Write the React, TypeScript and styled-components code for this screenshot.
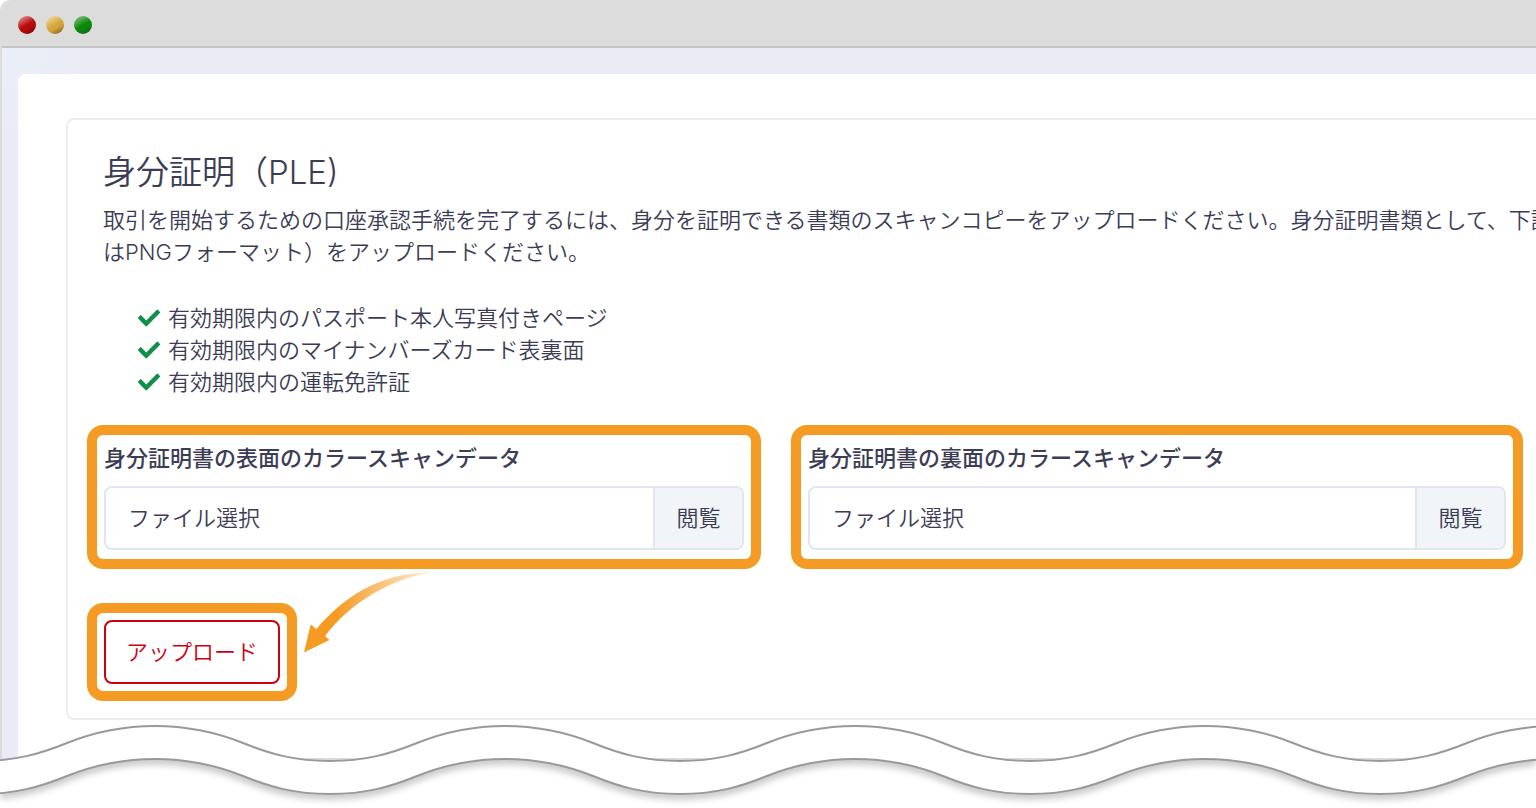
import React from "react";
import styled, { createGlobalStyle } from "styled-components";
import { FaCheck } from "react-icons/fa";

const GlobalStyle = createGlobalStyle`
  *, *::before, *::after { box-sizing: border-box; }
  body {
    margin: 0;
    background: #fff;
    color: #3c3d55;
    font-family: Inter, "Noto Sans CJK JP", sans-serif;
    font-size: 22px;
    font-weight: 350;
    line-height: 32px;
  }
  button, input { font: inherit; color: inherit; }
`;

const Page = styled.div`
  position: relative;
  overflow: hidden;
  padding-bottom: 48px;
`;

const BrowserWindow = styled.div`
  border: solid #dcdcdc;
  border-width: 0 0 2px 2px;
  border-top-left-radius: 10px;
  overflow: hidden;
`;

const TitleBar = styled.header`
  display: flex;
  align-items: center;
  gap: 10px;
  height: 48px;
  margin-left: -2px;
  padding: 4px 18px 0;
  background: #dcdcdc;
  border-bottom: 2px solid #c4c4c4;
`;

const Dot = styled.span<{ $light: string; $main: string; $dark: string }>`
  width: 18px;
  height: 18px;
  border-radius: 50%;
  background: linear-gradient(
    150deg,
    ${(p) => p.$light} 8%,
    ${(p) => p.$main} 50%,
    ${(p) => p.$main} 62%,
    ${(p) => p.$dark} 92%
  );
`;

const Viewport = styled.main`
  padding: 26px 0 0 16px;
  background: radial-gradient(circle at 0 0, #e9f0f8, #ebebf6 90px);
`;

const Sheet = styled.div`
  padding: 44px 0 38px 48px;
  background: #fff;
  border-top-left-radius: 8px;
`;

const Card = styled.section`
  padding: 32px 13px 17px 19px;
  border: solid #ededed;
  border-width: 2px 0 2px 2px;
  border-radius: 8px 0 0 8px;
`;

const Intro = styled.div`
  padding-left: 16px;
  margin-right: -13px;
  overflow: hidden;
  white-space: nowrap;
`;

const Title = styled.h1`
  margin: 0 0 12px;
  font-size: 33px;
  font-weight: 350;
  line-height: 40px;
`;

const Lead = styled.p`
  margin: 0 0 34px;
`;

const DocumentList = styled.ul`
  margin: 0 0 27px;
  padding: 0 0 0 35px;
  list-style: none;
`;

const DocumentItem = styled.li`
  display: flex;
  align-items: center;
  gap: 8px;

  svg { color: #148f4b; }
`;

const Fields = styled.div`
  display: grid;
  grid-template-columns: 674fr 732fr;
  gap: 30px;
  margin-bottom: 34px;
`;

const Highlight = styled.div`
  border: 10px solid #f59b23;
  border-radius: 16px;
  padding: 7px;
`;

const FieldHighlight = styled(Highlight)`
  padding-bottom: 9px;
`;

const UploadHighlight = styled(Highlight)`
  position: relative;
  width: fit-content;
`;

const FieldLabel = styled.label`
  display: block;
  margin-bottom: 12px;
  font-weight: 500;
`;

const FilePicker = styled.div`
  display: flex;
  height: 64px;
  border: 2px solid #e2e5ef;
  border-radius: 8px;
  overflow: hidden;
`;

const FileName = styled.input`
  flex: 1;
  min-width: 0;
  padding: 0 22px;
  border: 0;
  background: #fff;

  &::placeholder { color: inherit; opacity: 1; }
`;

const BrowseButton = styled.button`
  width: 89px;
  padding: 0;
  border: 0;
  border-left: 2px solid #e2e5ef;
  background: #f1f5f8;
`;

const UploadButton = styled.button`
  display: block;
  height: 64px;
  padding: 0 20px;
  border: 2px solid #cc0011;
  border-radius: 8px;
  background: #fff;
  color: #cc0011;
`;

const Arrow = styled.svg`
  position: absolute;
  left: 207px;
  top: -42px;
`;

const TornEdge = styled.svg`
  position: absolute;
  left: 0;
  bottom: 0;
  width: 100%;
  height: 88px;
  filter: drop-shadow(0 5px 3px rgba(0, 0, 0, 0.2));
  pointer-events: none;
`;

const documents = [
  "有効期限内のパスポート本人写真付きページ",
  "有効期限内のマイナンバーズカード表裏面",
  "有効期限内の運転免許証",
];

const scans = [
  { id: "front", label: "身分証明書の表面のカラースキャンデータ" },
  { id: "back", label: "身分証明書の裏面のカラースキャンデータ" },
];

function PointerArrow() {
  return (
    <Arrow width="134" height="84" viewBox="0 0 134 84" aria-hidden="true">
      <defs>
        <linearGradient id="arrowFade" x1="0" y1="0" x2="1" y2="0">
          <stop offset="0.25" stopColor="#f59b23" />
          <stop offset="1" stopColor="#f59b23" stopOpacity="0.1" />
        </linearGradient>
      </defs>
      <path
        d="M0 81.5 6.7 53.5 12.3 58C45 20 82 1 132 1C88 6 46 32 21 65L25.5 69Z"
        fill="url(#arrowFade)"
      />
    </Arrow>
  );
}

function Waves() {
  return (
    <TornEdge aria-hidden="true">
      <defs>
        <pattern id="wave" x="-20" y="0" width="350" height="88" patternUnits="userSpaceOnUse">
          <path
            d="M-2 41H0C35 41 60 34 87 23C112 13 140 6 175 6C210 6 238 13 263 23C290 34 315 41 350 41H352V74H350C315 74 290 67 263 56C238 46 210 39 175 39C140 39 112 46 87 56C60 67 35 74 0 74H-2Z"
            fill="#fff"
            stroke="#999"
            strokeWidth="2"
          />
        </pattern>
      </defs>
      <rect width="100%" height="88" fill="url(#wave)" />
    </TornEdge>
  );
}

export default function App() {
  return (
    <Page lang="ja">
      <GlobalStyle />
      <BrowserWindow>
        <TitleBar>
          <Dot $light="#e08c8c" $main="#b80c0c" $dark="#820808" />
          <Dot $light="#f2d9a0" $main="#d6a53a" $dark="#80621c" />
          <Dot $light="#7fbf7f" $main="#0a8a0a" $dark="#1f5f1f" />
        </TitleBar>
        <Viewport>
          <Sheet>
            <Card>
              <Intro>
                <Title>身分証明（PLE)</Title>
                <Lead>
                  取引を開始するための口座承認手続を完了するには、身分を証明できる書類のスキャンコピーをアップロードください。身分証明書類として、下記の
                  <br />
                  はPNGフォーマット）をアップロードください。
                </Lead>
                <DocumentList>
                  {documents.map((name) => (
                    <DocumentItem key={name}>
                      <FaCheck size={22} aria-hidden="true" />
                      {name}
                    </DocumentItem>
                  ))}
                </DocumentList>
              </Intro>
              <Fields>
                {scans.map(({ id, label }) => (
                  <FieldHighlight key={id}>
                    <FieldLabel htmlFor={id}>{label}</FieldLabel>
                    <FilePicker>
                      <FileName id={id} type="text" placeholder="ファイル選択" readOnly />
                      <BrowseButton type="button">閲覧</BrowseButton>
                    </FilePicker>
                  </FieldHighlight>
                ))}
              </Fields>
              <UploadHighlight>
                <UploadButton type="button">アップロード</UploadButton>
                <PointerArrow />
              </UploadHighlight>
            </Card>
          </Sheet>
        </Viewport>
      </BrowserWindow>
      <Waves />
    </Page>
  );
}
